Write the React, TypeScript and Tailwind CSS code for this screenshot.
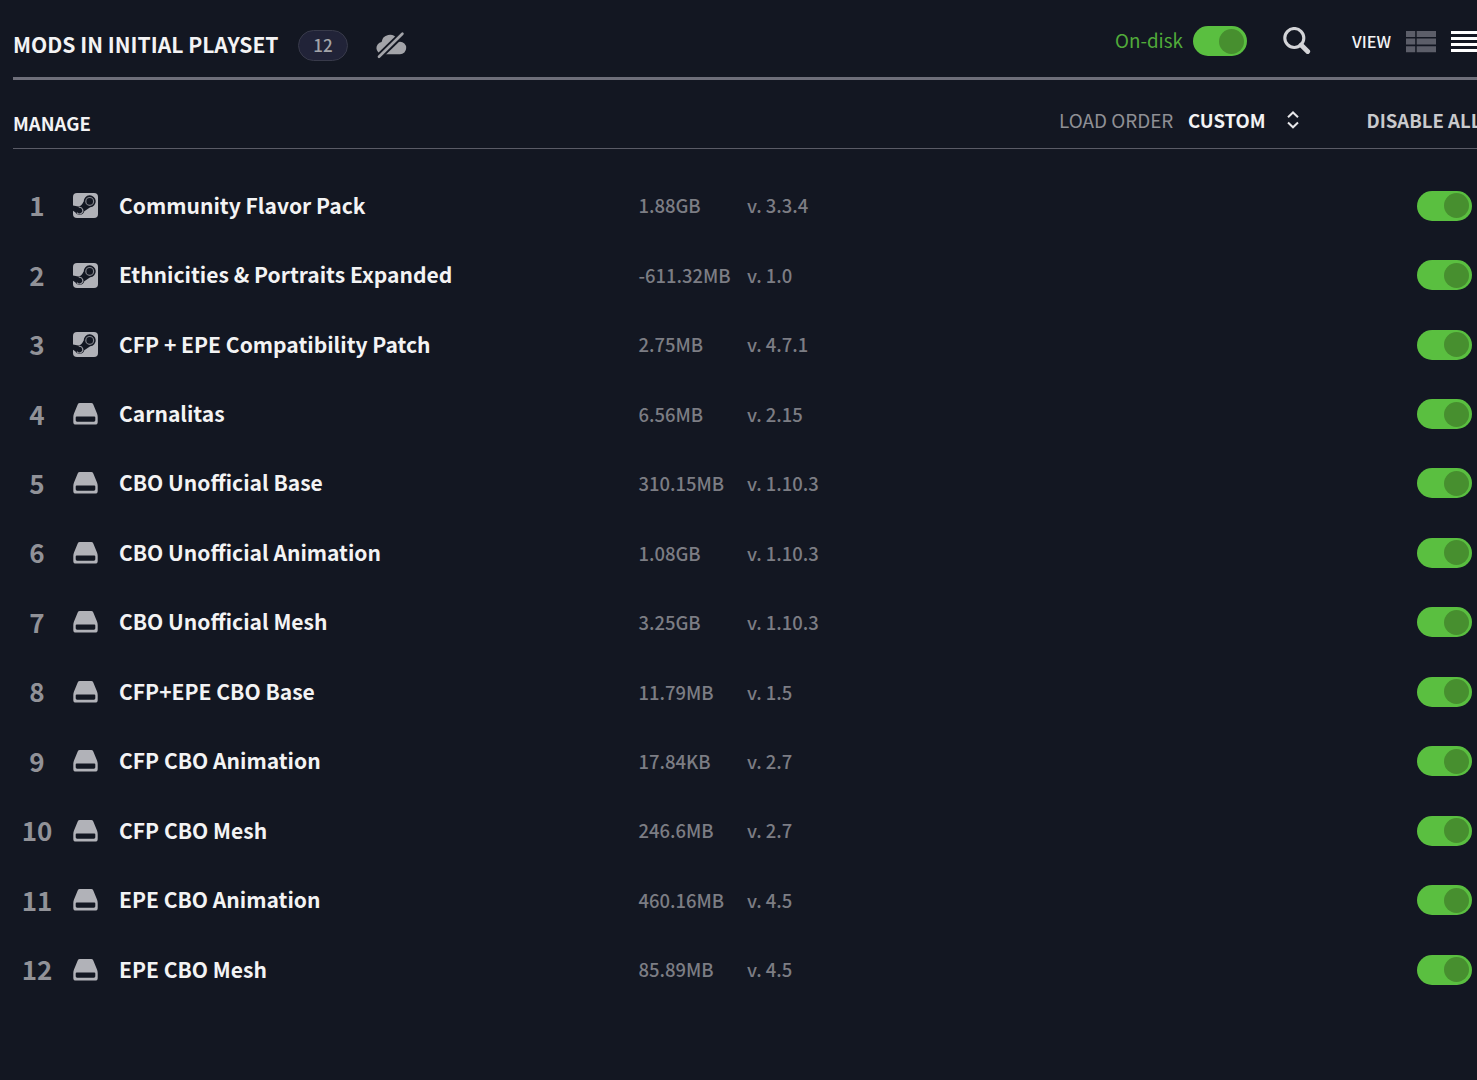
import clsx from "clsx";

type Mod = {
  name: string;
  size: string;
  version: string;
  source: "steam" | "local";
};

const mods: Mod[] = [
  { name: "Community Flavor Pack", size: "1.88GB", version: "3.3.4", source: "steam" },
  { name: "Ethnicities & Portraits Expanded", size: "-611.32MB", version: "1.0", source: "steam" },
  { name: "CFP + EPE Compatibility Patch", size: "2.75MB", version: "4.7.1", source: "steam" },
  { name: "Carnalitas", size: "6.56MB", version: "2.15", source: "local" },
  { name: "CBO Unofficial Base", size: "310.15MB", version: "1.10.3", source: "local" },
  { name: "CBO Unofficial Animation", size: "1.08GB", version: "1.10.3", source: "local" },
  { name: "CBO Unofficial Mesh", size: "3.25GB", version: "1.10.3", source: "local" },
  { name: "CFP+EPE CBO Base", size: "11.79MB", version: "1.5", source: "local" },
  { name: "CFP CBO Animation", size: "17.84KB", version: "2.7", source: "local" },
  { name: "CFP CBO Mesh", size: "246.6MB", version: "2.7", source: "local" },
  { name: "EPE CBO Animation", size: "460.16MB", version: "4.5", source: "local" },
  { name: "EPE CBO Mesh", size: "85.89MB", version: "4.5", source: "local" },
];

const Toggle = ({ className }: { className: string }) => (
  <button
    className={clsx(
      "flex h-[30px] shrink-0 items-center justify-end rounded-full bg-[#5abf40] pr-[3px]",
      className
    )}
  >
    <span className="size-[25px] rounded-full bg-[#478f2f]" />
  </button>
);

const CloudOffIcon = () => (
  <svg width="32" height="28" viewBox="0 0 32 28">
    <path
      d="M7.2 23.2a6.2 6.2 0 0 1-.6-12.3A8.4 8.4 0 0 1 22 7.6a8 8 0 0 1 1.6 3.2H25a6.2 6.2 0 0 1 0 12.400z"
      fill="#a3a4a9"
    />
    <path d="M3.6 26 27.800 2.600" stroke="#131722" strokeWidth="6.600" />
    <path d="M4 25.800 27.400 2.800" stroke="#a3a4a9" strokeWidth="2.700" strokeLinecap="round" />
  </svg>
);

const SearchIcon = () => (
  <svg width="28" height="28" viewBox="0 0 28 28" fill="none" stroke="#d3d4d7">
    <circle cx="11.3" cy="11" r="9.5" strokeWidth="3.1" />
    <path d="m18.2 18 6.5 6.5" strokeWidth="4.8" strokeLinecap="round" />
  </svg>
);

const DetailViewIcon = () => (
  <svg width="30" height="22" viewBox="0 0 30 22" fill="#5c5e69">
    <path d="M0 0h9.2v6H0zM10.7 0H30v6H10.7zM0 7.6h9.2v6H0zM10.7 7.6H30v6H10.7zM0 15.2h9.2v6H0zM10.7 15.2H30v6H10.7z" />
  </svg>
);

const ListViewIcon = () => (
  <svg width="31" height="22" viewBox="0 0 31 22" fill="#ffffff">
    <path d="M0 0h31v3H0zM0 6h31v3H0zM0 12h31v3H0zM0 18h31v3H0z" />
  </svg>
);

const SortIcon = () => (
  <svg width="12" height="18" viewBox="0 0 12 18" fill="none" stroke="#e6e6e8" strokeWidth="2">
    <path d="M1 6.3 6 1.5l5 4.8M1 11.5l5 4.8 5-4.8" />
  </svg>
);

const SteamIcon = () => (
  <svg width="25" height="25" viewBox="0 0 25 25">
    <rect width="25" height="25" rx="4" fill="#b1b2b8" />
    <path
      d="M0 12.6 5.300 13.600Q8.300 13.200 10.700 8.400A6 6 0 1 1 17.200 14.300L11.300 18.300A4.900 4.900 0 0 1 2.200 19.200L0 17.800z"
      fill="#131722"
    />
    <circle cx="16.700" cy="8.400" r="3.900" fill="none" stroke="#81828a" strokeWidth="1.200" />
    <path d="M5.800 14.400A3.300 3.300 0 1 1 3.900 19.600" fill="none" stroke="#9b9ca3" strokeWidth="1.100" />
  </svg>
);

const DiskIcon = () => (
  <svg width="25" height="22" viewBox="0 0 25 22">
    <path
      fillRule="evenodd"
      fill="#b1b2b8"
      d="M6.8 0h11.4q1.5 0 2.1 1.4L24 10.5q.7 1.8.7 3.5v5q0 2.6-2.6 2.6H2.9Q.3 21.6.3 19v-5q0-1.7.7-3.5L4.7 1.4Q5.3 0 6.8 0zM3.7 13.4q-1 0-1 1v2.9q0 1.4 1.4 1.4h16.8q1.4 0 1.4-1.4v-2.9q0-1-1-1z"
    />
  </svg>
);

const App = () => {
  return (
    <div className="h-[1080px] w-full overflow-hidden bg-[#131722] pl-[13px] font-['Noto_Sans_CJK_SC','Source_Sans_Pro',sans-serif] text-[#f3f3f4]">
      {/* Header */}
      <div className="flex h-[80px] w-[1500px] justify-between border-b-[3px] border-[#6e6f7a]">
        <div className="flex h-[90px] items-center">
          <h1 className="w-[285px] whitespace-nowrap text-[21.1px] font-bold leading-none">
            MODS IN INITIAL PLAYSET
          </h1>
          <span className="flex h-[31px] w-[50px] items-center justify-center rounded-full border border-[#383a4a] bg-[#212338] pb-[2px] text-[17px] font-medium leading-none text-[#a3a4a9]">
            {mods.length}
          </span>
          <div className="ml-[27px]">
            <CloudOffIcon />
          </div>
        </div>

        <div className="flex h-[82px] w-[398px] shrink-0 items-center whitespace-nowrap">
          <span className="w-[78px] pb-px text-[18.8px] leading-none text-[#51ab3a]">On-disk</span>
          <Toggle className="w-[54px]" />
          <div className="ml-[36px]">
            <SearchIcon />
          </div>
          <span className="ml-[41px] w-[54px] text-[16.3px] font-medium leading-none">VIEW</span>
          <div className="pt-px">
            <DetailViewIcon />
          </div>
          <div className="ml-[15px] pt-px">
            <ListViewIcon />
          </div>
        </div>
      </div>

      {/* Manage bar */}
      <div className="flex h-[69px] w-[1500px] justify-between border-b-[1.5px] border-[#5a5b66]">
        <span className="flex h-[86px] items-center text-[18.5px] font-bold leading-none">
          MANAGE
        </span>
        <div className="flex h-[80px] w-[454px] shrink-0 items-center whitespace-nowrap text-[18.5px] leading-none">
          <span className="w-[129px] text-[18.9px] text-[#8f9095]">LOAD ORDER</span>
          <span className="w-[98.5px] font-bold">CUSTOM</span>
          <SortIcon />
          <span className="ml-[68px] font-bold text-[#c9cacd]">DISABLE ALL</span>
        </div>
      </div>

      {/* Mod list */}
      <ul className="pt-[22px]">
        {mods.map((mod, index) => (
          <li key={mod.name} className="flex h-[69.45px] items-center leading-none">
            <span className="w-[48px] pb-px text-center text-[26px] font-bold text-[#919298]">
              {index + 1}
            </span>
            <span className="ml-[12.4px] w-[45.6px]">
              {mod.source === "steam" ? <SteamIcon /> : <DiskIcon />}
            </span>
            <span className="w-[519.4px] whitespace-nowrap pb-px text-[21.05px] font-bold">
              {mod.name}
            </span>
            <span className="w-[108.6px] text-[18.45px] font-medium text-[#7c7d84]">{mod.size}</span>
            <span className="w-[670px] whitespace-nowrap text-[18.45px] font-medium text-[#7c7d84]">
              v. {mod.version}
            </span>
            <Toggle className="w-[55px]" />
          </li>
        ))}
      </ul>
    </div>
  );
};

export default App;
